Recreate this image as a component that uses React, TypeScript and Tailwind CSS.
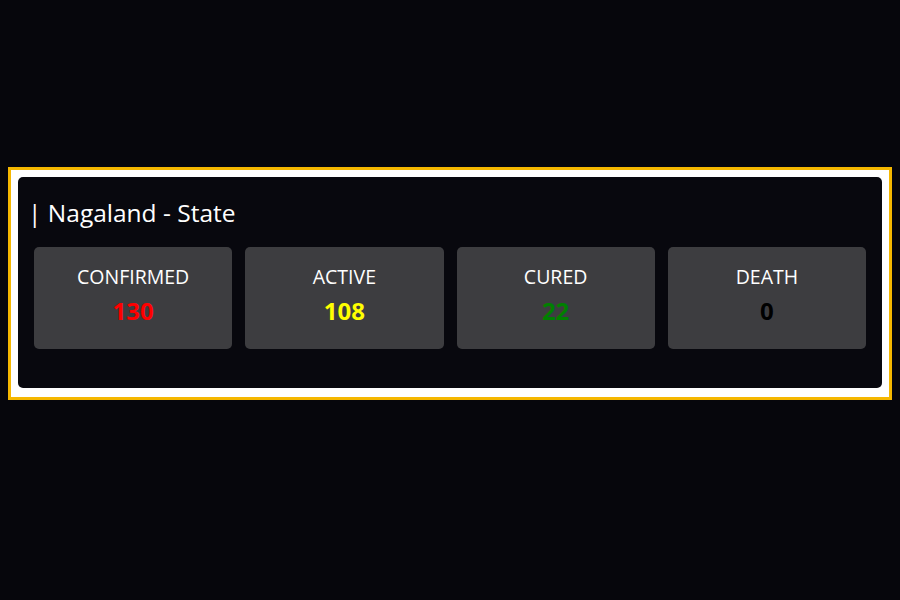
import React from 'react';

const stats = [
    { label: 'CONFIRMED', value: '130', color: 'text-[#ff0000]' },
    { label: 'ACTIVE', value: '108', color: 'text-[#ffff00]' },
    { label: 'CURED', value: '22', color: 'text-[#008000]' },
    { label: 'DEATH', value: '0', color: 'text-[#000000]' },
];

const StatCard = ({ label, value, color }: { label: string; value: string; color: string }) => {
    return (
        <div className="bg-[#3d3d40] rounded-[5px] h-[102px] flex flex-col items-center pt-[16px]">
            <p className="text-[19.5px] leading-[28px] text-white">{label}</p>
            <p className={`text-[24px] leading-[32px] mt-[4px] font-bold ${color}`}>{value}</p>
        </div>
    );
};

const App = () => {
    return (
        <div
            className="w-[900px] h-[600px] bg-[#06060c] pt-[167px] px-[8px]"
            style={{ fontFamily: '"Open Sans", "Noto Sans", sans-serif' }}
        >
            <div className="border-[3px] border-[#f5b700] bg-white p-[7px] pt-[7px] pb-[9px]">
                <div className="bg-[#08080e] rounded-[5px] px-[16px] pt-[19px] pb-[39px]">
                    <h2 className="text-[24.5px] leading-[34px] text-white mb-[17px] ml-[-6px]">
                        | Nagaland - State
                    </h2>
                    <div className="grid grid-cols-4 gap-[13px]">
                        {stats.map((s) => (
                            <StatCard key={s.label} {...s} />
                        ))}
                    </div>
                </div>
            </div>
        </div>
    );
};

export default App;
